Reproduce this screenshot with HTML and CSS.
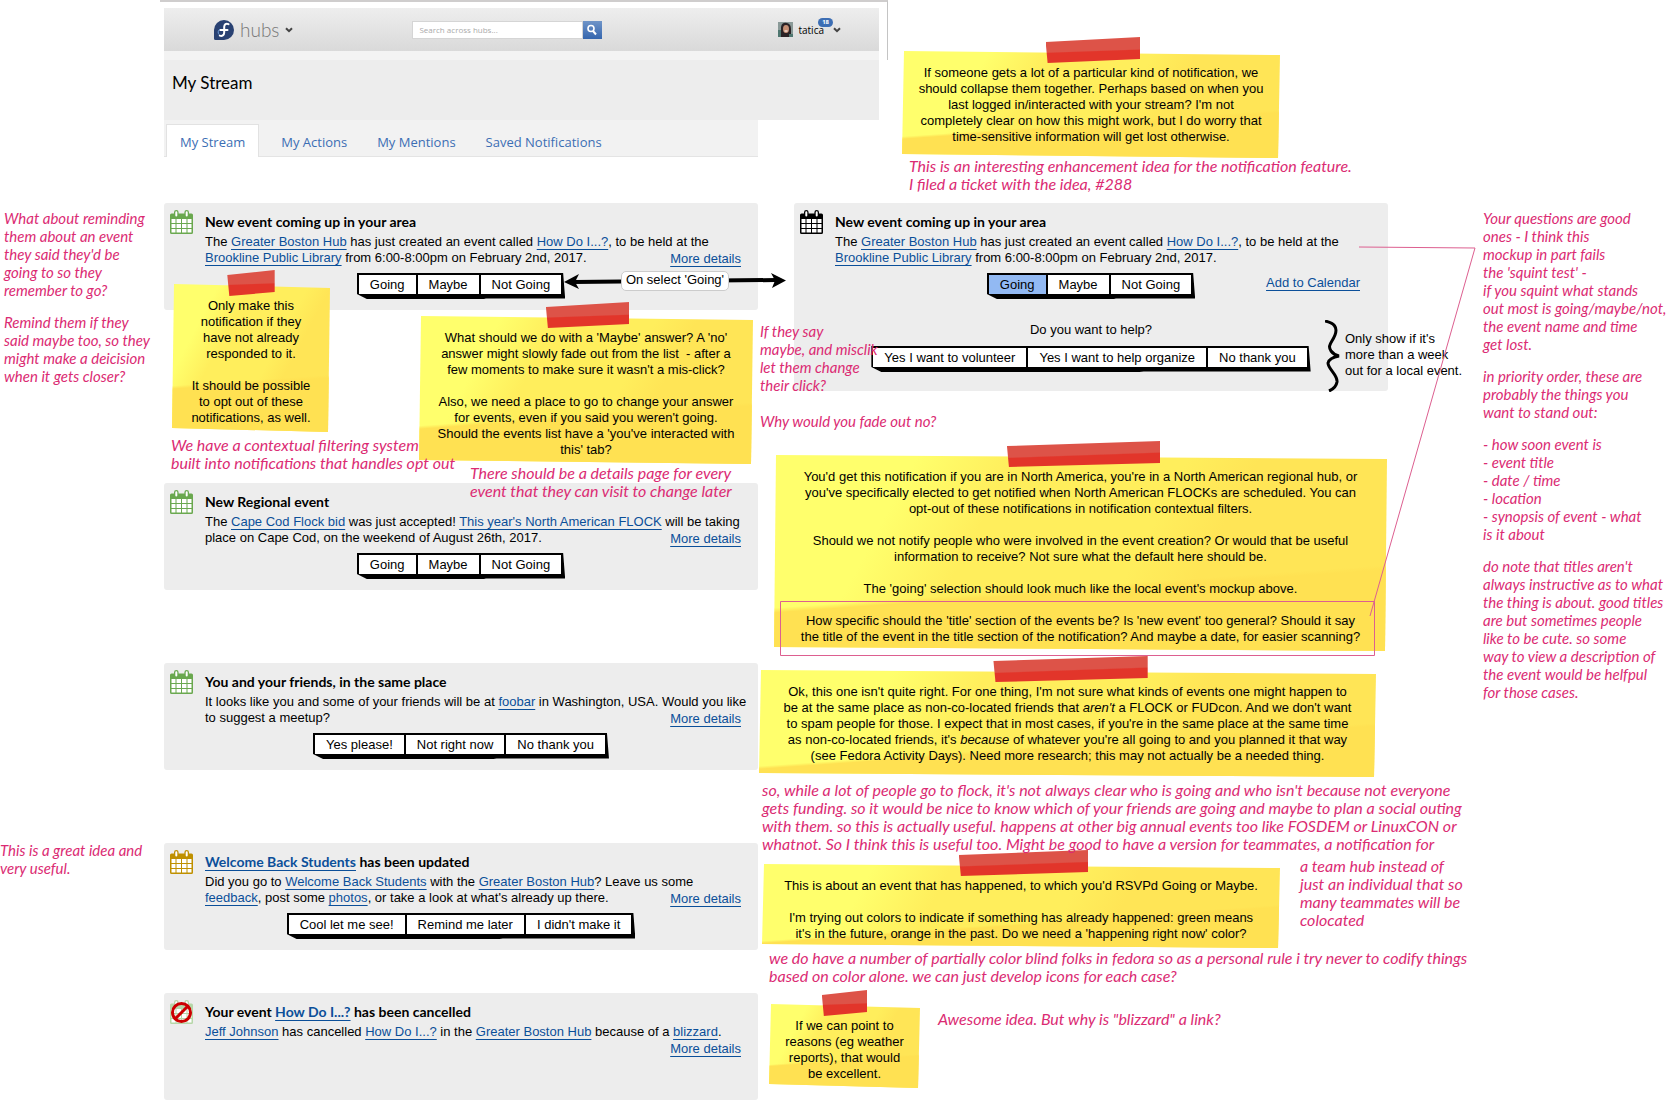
FILE: index.html
```html
<!DOCTYPE html>
<html lang="en">
<head>
<meta charset="utf-8">
<title>Fedora Hubs - My Stream</title>
<link rel="stylesheet" href="styles.css">
</head>
<body>
<svg class="defs" aria-hidden="true">
  <symbol id="calendar" viewBox="0 0 23 24">
    <path fill="currentColor" d="M1.500 3.500H4V2.200a2.300 2.200 0 0 1 4.600 0V3.500H14.400V2.200a2.300 2.200 0 0 1 4.600 0V3.500H21.500Q23 3.500 23 5V22.500Q23 24 21.500 24H1.500Q0 24 0 22.500V5Q0 3.500 1.500 3.500Z"/>
    <path fill="#fff" d="M5.300 2.200a1 1 0 0 1 2 0V5.500a1 1 0 0 1-2 0ZM15.700 2.200a1 1 0 0 1 2 0V5.500a1 1 0 0 1-2 0ZM1.500 9H5.500V13H1.500ZM6.500 9H11V13H6.500ZM12 9H16.500V13H12ZM17.500 9H21.500V13H17.500ZM1.500 14H5.500V18H1.500ZM6.500 14H11V18H6.500ZM12 14H16.500V18H12ZM17.500 14H21.500V18H17.500ZM1.500 19H5.500V22.500H1.500ZM6.500 19H11V22.500H6.500ZM12 19H16.500V22.500H12ZM17.500 19H21.500V22.500H17.500Z"/>
  </symbol>
  <symbol id="chevron" viewBox="0 0 8 6"><path fill="none" stroke="#444" stroke-width="2" d="M1 1.200 4 4.200 7 1.200"/></symbol>
</svg>

<main class="board">
  <header class="masthead">
    <div class="window">
      <div class="topbar">
        <a class="brand" href="#">
          <svg class="logo" viewBox="0 0 20 20"><path fill="#294172" d="M10 0A10 10 0 1 1 10 20H1.500Q0 20 0 18.500V10A10 10 0 0 1 10 0Z"/><path fill="none" stroke="#fff" stroke-width="2" stroke-linecap="round" d="M14.500 4.200C12 3 10.300 4.500 10.200 6.800V12.500C10.200 15.200 8 16.500 5.800 15.600M6.300 10H13.500"/><path fill="none" stroke="#6b9bd8" d="M5.800 9.200C4 10.500 3.600 13 5 14.500"/></svg>
          hubs
          <svg class="chevron"><use href="#chevron"/></svg>
        </a>
        <form class="search">
          <input type="text" aria-label="Search across hubs" placeholder="Search across hubs...">
          <button type="button" aria-label="Search"><svg viewBox="0 0 12 12"><circle cx="5" cy="4.500" r="3" fill="none" stroke="#fff" stroke-width="1.600"/><path stroke="#fff" stroke-width="2" d="M7 7 10 10.500"/></svg></button>
        </form>
        <div class="user">
          <svg class="avatar" viewBox="0 0 15 15"><path fill="#8a9a98" d="M0 0H15V15H0Z"/><path fill="#2b2326" d="M3 15V5Q4 0 9 1Q13 2 13 7V15Z"/><ellipse cx="8" cy="7" rx="3" ry="4" fill="#c58f74"/><path fill="#4f7770" d="M0 8H3V15H0ZM11 12H15V15H11Z"/><path stroke="#fff" d="M6.500 9H9.500"/></svg>
          <span>tatica</span>
          <span class="badge">18</span>
          <svg class="chevron"><use href="#chevron"/></svg>
        </div>
      </div>
    </div>
    <h1>My Stream</h1>
  </header>

  <aside class="remarks remarks-left">
    <p class="ink">What about reminding
them about an event
they said they'd be
going to so they
remember to go?</p>
    <p class="ink">Remind them if they
said maybe too, so they
might make a deicision
when it gets closer?</p>
    <p class="ink later">This is a great idea and
very useful.</p>
  </aside>

  <section class="mock">
    <nav class="tabs">
      <a class="active" href="#">My Stream</a>
      <a href="#">My Actions</a>
      <a href="#">My Mentions</a>
      <a href="#">Saved Notifications</a>
    </nav>

    <article class="card space-xl">
      <svg class="icon green"><use href="#calendar"/></svg>
      <h2>New event coming up in your area</h2>
      <p>The <a href="#">Greater Boston Hub</a> has just created an event called <a href="#">How Do I...?</a>, to be held at the
<a href="#">Brookline Public Library</a> from 6:00-8:00pm on February 2nd, 2017.</p>
      <a class="more" href="#">More details</a>
      <div class="choices"><button>Going</button><button>Maybe</button><button>Not Going</button></div>
    </article>

    <article class="card space-m">
      <svg class="icon green"><use href="#calendar"/></svg>
      <h2>New Regional event</h2>
      <p>The <a href="#">Cape Cod Flock bid</a> was just accepted! <a href="#">This year's North American FLOCK</a> will be taking
place on Cape Cod, on the weekend of August 26th, 2017.</p>
      <a class="more" href="#">More details</a>
      <div class="choices"><button>Going</button><button>Maybe</button><button>Not Going</button></div>
    </article>

    <article class="card space-m">
      <svg class="icon green"><use href="#calendar"/></svg>
      <h2>You and your friends, in the same place</h2>
      <p>It looks like you and some of your friends will be at <a href="#">foobar</a> in Washington, USA. Would you like
to suggest a meetup?</p>
      <a class="more" href="#">More details</a>
      <div class="choices"><button>Yes please!</button><button>Not right now</button><button>No thank you</button></div>
    </article>

    <article class="card space-s">
      <svg class="icon orange"><use href="#calendar"/></svg>
      <h2><a href="#">Welcome Back Students</a> has been updated</h2>
      <p>Did you go to <a href="#">Welcome Back Students</a> with the <a href="#">Greater Boston Hub</a>? Leave us some
<a href="#">feedback</a>, post some <a href="#">photos</a>, or take a look at what's already up there.</p>
      <a class="more" href="#">More details</a>
      <div class="choices"><button>Cool let me see!</button><button>Remind me later</button><button>I didn't make it</button></div>
    </article>

    <article class="card">
      <svg class="icon" viewBox="0 0 23 24"><use class="faded" href="#calendar"/><circle cx="11.500" cy="12.500" r="9" fill="none" stroke="#c00" stroke-width="3"/><path stroke="#c00" stroke-width="3" d="M17.500 6.500 5.500 18.500"/></svg>
      <h2>Your event <a href="#">How Do I...?</a> has been cancelled</h2>
      <p><a href="#">Jeff Johnson</a> has cancelled <a href="#">How Do I...?</a> in the <a href="#">Greater Boston Hub</a> because of a <a href="#">blizzard</a>.</p>
      <a class="more" href="#">More details</a>
    </article>
  </section>

  <section class="result">
    <article class="card tall">
      <svg class="icon"><use href="#calendar"/></svg>
      <h2>New event coming up in your area</h2>
      <p>The <a href="#">Greater Boston Hub</a> has just created an event called <a href="#">How Do I...?</a>, to be held at the
<a href="#">Brookline Public Library</a> from 6:00-8:00pm on February 2nd, 2017.</p>
      <div class="choices"><button class="chosen">Going</button><button>Maybe</button><button>Not Going</button></div>
      <a class="add" href="#">Add to Calendar</a>
      <p class="question">Do you want to help?</p>
      <div class="choices help"><button>Yes I want to volunteer</button><button>Yes I want to help organize</button><button>No thank you</button></div>
    </article>
  </section>

  <aside class="remarks remarks-right">
    <p class="ink">Your questions are good
ones - I think this
mockup in part fails
the 'squint test' -
if you squint what stands
out most is going/maybe/not,
the event name and time
get lost.</p>
    <p class="ink">in priority order, these are
probably the things you
want to stand out:</p>
    <p class="ink">- how soon event is
- event title
- date / time
- location
- synopsis of event - what
is it about</p>
    <p class="ink">do note that titles aren't
always instructive as to what
the thing is about. good titles
are but sometimes people
like to be cute. so some
way to view a description of
the event would be helfpul
for those cases.</p>
  </aside>

  <!-- Arrow between the two states of the first event -->
  <div class="flow-arrow">
    <svg viewBox="0 0 222 16"><path stroke="#000" stroke-width="4" d="M10 9 212 7"/><path d="M0 9 15 1 11 9 15 16ZM222 7.500 207 0 211 7.500 208 15Z"/></svg>
    <span>On select 'Going'</span>
  </div>
  <svg class="brace" viewBox="0 0 16 72"><path fill="none" stroke="#000" stroke-width="3" d="M0 1C9 3 13 7 10 15C7 23 2 25 6 31Q9 35 14 36Q4 38 3 43C3 49 13 55 12 62Q11 68 4 71"/></svg>
  <p class="brace-note">Only show if it's
more than a week
out for a local event.</p>

  <div class="sticky roomy note-collapse"><p>If someone gets a lot of a particular kind of notification, we
should collapse them together. Perhaps based on when you
last logged in/interacted with your stream? I'm not
completely clear on how this might work, but I do worry that
time-sensitive information will get lost otherwise.</p></div>

  <div class="sticky square note-only"><p>Only make this
notification if they
have not already
responded to it.

It should be possible
to opt out of these
notifications, as well.</p></div>

  <div class="sticky note-maybe"><p>What should we do with a 'Maybe' answer? A 'no'
answer might slowly fade out from the list  - after a
few moments to make sure it wasn't a mis-click?

Also, we need a place to go to change your answer
for events, even if you said you weren't going.
Should the events list have a 'you've interacted with
this' tab?</p></div>

  <div class="sticky note-regional"><p>You'd get this notification if you are in North America, you're in a North American regional hub, or
you've specifically elected to get notified when North American FLOCKs are scheduled. You can
opt-out of these notifications in notification contextual filters.

Should we not notify people who were involved in the event creation? Or would that be useful
information to receive? Not sure what the default here should be.

The 'going' selection should look much like the local event's mockup above.

How specific should the 'title' section of the events be? Is 'new event' too general? Should it say
the title of the event in the title section of the notification? And maybe a date, for easier scanning?</p></div>

  <div class="sticky roomy note-friends"><p>Ok, this one isn't quite right. For one thing, I'm not sure what kinds of events one might happen to
be at the same place as non-co-located friends that <em>aren't</em> a FLOCK or FUDcon. And we don't want
to spam people for those. I expect that in most cases, if you're in the same place at the same time
as non-co-located friends, it's <em>because</em> of whatever you're all going to and you planned it that way
(see Fedora Activity Days). Need more research; this may not actually be a needed thing.</p></div>

  <div class="sticky note-colors"><p>This is about an event that has happened, to which you'd RSVPd Going or Maybe.

I'm trying out colors to indicate if something has already happened: green means
it's in the future, orange in the past. Do we need a 'happening right now' color?</p></div>

  <div class="sticky square note-reasons"><p>If we can point to
reasons (eg weather
reports), that would
be excellent.</p></div>

  <svg class="pointer" viewBox="0 0 697 412"><path fill="none" stroke="#dd5f90" d="M579 1 695 2 590 370M.5 355.500H594.500V409.500H.5Z"/></svg>

  <p class="ink pin ink-ticket">This is an interesting enhancement idea for the notification feature.
I filed a ticket with the idea, #288</p>
  <p class="ink pin ink-filter">We have a contextual filtering system
built into notifications that handles opt out</p>
  <p class="ink pin ink-details">There should be a details page for every
event that they can visit to change later</p>
  <p class="ink pin ink-misclick">If they say
maybe, and misclik
let them change
their click?

Why would you fade out no?</p>
  <p class="ink pin ink-flock">so, while a lot of people go to flock, it's not always clear who is going and who isn't because not everyone
gets funding. so it would be nice to know which of your friends are going and maybe to plan a social outing
with them. so this is actually useful. happens at other big annual events too like FOSDEM or LinuxCON or
whatnot. So I think this is useful too. Might be good to have a version for teammates, a notification for</p>
  <p class="ink pin ink-team">a team hub instead of
just an individual that so
many teammates will be
colocated</p>
  <p class="ink pin ink-blind">we do have a number of partially color blind folks in fedora so as a personal rule i try never to codify things
based on color alone. we can just develop icons for each case?</p>
  <p class="ink pin ink-awesome">Awesome idea. But why is "blizzard" a link?</p>
</main>
</body>
</html>
```
FILE: styles.css
```css
* { box-sizing: border-box; }

body {
  margin: 0;
  background: #fff;
  color: #000;
  font: 13px/16px "Liberation Sans", sans-serif;
}

h1, h2, p { margin: 0; }
a { color: #0b4f99; text-underline-offset: 3px; }
p, h2 { white-space: pre; }
.defs { position: absolute; width: 0; height: 0; }

/* Board: margin remarks, stream, resulting state, remarks */
.board {
  position: relative;
  display: grid;
  grid-template-columns: 164px minmax(0, 594fr) 36px minmax(0, 594fr) 95px 194px;
  align-items: start;
  overflow: hidden;
}

/* Header of the mocked page */
.masthead { grid-column: 2 / 5; max-width: 728px; margin-left: -4px; }
.window {
  padding: 6px 8px 0 4px;
  border-top: 2px solid #cfcdcd;
  border-right: 1px solid #c4c4c4;
}
.topbar {
  display: flex;
  align-items: center;
  height: 52px;
  padding: 0 38px 0 50px;
  border-bottom: 9px solid #f3f3f3;
  background: linear-gradient(#eee, #d9d9d9);
}
.brand {
  display: flex;
  align-items: center;
  gap: 6px;
  color: #777;
  font: 300 19px/20px Lato, sans-serif;
  text-decoration: none;
}
.logo { width: 20px; height: 20px; }
.chevron { width: 8px; height: 6px; }
.search { display: flex; margin-left: 119px; }
.search input {
  width: 171px;
  height: 18px;
  padding: 0 6px;
  border: 1px solid #d5d5d5;
  background: #fff;
  font: 8px/16px "Open Sans", sans-serif;
}
.search input::placeholder { color: #aaa; }
.search button { width: 19px; height: 18px; padding: 3px; border: 0; background: linear-gradient(#6f94c8, #3566ae); }
.search svg { display: block; width: 12px; height: 12px; }
.user { position: relative; display: flex; align-items: center; gap: 5px; margin-left: auto; font: 10px/16px "Open Sans", sans-serif; }
.user .chevron { margin-left: 4px; }
.avatar { width: 15px; height: 15px; }
.badge {
  position: absolute;
  top: -4px;
  right: 8px;
  padding: 0 4px;
  border-radius: 5px;
  background: #3c6eb4;
  color: #fff;
  font: bold 6px/9px "Open Sans", sans-serif;
}
h1 {
  margin: 0 9px 0 4px;
  padding: 13px 8px 27px;
  background: #ededed;
  font: 17px/20px Lato, sans-serif;
}

.tabs {
  display: flex;
  height: 37px;
  padding: 4px 0 0 2px;
  border-bottom: 1px solid #e4e4e4;
  background: #f2f2f2;
  font: 13px/36px "Open Sans", sans-serif;
}
.tabs a { padding: 0 15px; color: #3c6eb4; text-decoration: none; }
.tabs .active { margin-right: 7px; padding: 0 13px; height: 33px; border: 1px solid #e2e2e2; border-bottom: 0; background: #fff; line-height: 34px; }

/* Notifications */
.mock { grid-column: 2; }
.result { grid-column: 4; padding-top: 83px; }
.tabs + .card { margin-top: 46px; }
.card {
  display: grid;
  grid-template-columns: 41px minmax(0, 1fr);
  align-content: start;
  min-height: 107px;
  padding-top: 11px;
  border-radius: 3px;
  background: #ededed;
}
.card h2 { grid-column: 2; grid-row: 1; padding-bottom: 4px; font: bold 14px/16px Lato, sans-serif; }
.card > p { grid-column: 2; grid-row: 2; min-height: 33px; }
.icon { grid-column: 1; grid-row: 1 / 3; width: 23px; height: 24px; margin: -4px 0 0 6px; }
.green { color: #6aa84f; }
.orange { color: #bf9000; }
.faded { color: #b6d7a8; }
.more { grid-column: 2; grid-row: 2; place-self: end; padding-right: 17px; }
.choices {
  grid-column: 1 / 3;
  grid-row: 3;
  justify-self: center;
  display: flex;
  gap: 2px;
  margin-top: 6px;
  padding: 2px 4px 5px 2px;
  background: #000;
  clip-path: polygon(0 0, calc(100% - 2px) 0, 100% 98%, 62% 98%, 61% 100%, 10px 100%, 0 calc(100% - 5px));
}
.choices button { height: 19px; padding: 0 11px; border: 0; background: #fff; color: #000; font: inherit; }
.choices .chosen { background: #92b9f3; }
.add { grid-column: 2; grid-row: 3; place-self: center end; padding-right: 28px; }
.card .question { grid-column: 1 / 3; grid-row: 4; justify-self: center; min-height: 0; padding-top: 23px; }
.card .help { grid-row: 5; margin-top: 8px; }
.space-xl { margin-bottom: 173px; }
.space-m { margin-bottom: 73px; }
.space-s { margin-bottom: 43px; }
.tall { min-height: 188px; }

/* Hand-written remarks */
.ink { color: #db2b73; font: italic 16px/18px Lato, sans-serif; }
.remarks { display: flex; flex-direction: column; gap: 14px; padding-top: 89px; }
.remarks .ink, .ink-misclick { font-size: 15px; }
.remarks-left { grid-column: 1; padding-left: 4px; }
.remarks-right { grid-column: 6; }
.later { margin: 442px 0 0 -4px; }
.pin { position: absolute; }
.ink-ticket { left: 909px; top: 157px; }
.ink-filter { left: 171px; top: 436px; }
.ink-details { left: 470px; top: 464px; }
.ink-misclick { left: 760px; top: 322px; }
.ink-flock { left: 762px; top: 781px; }
.ink-team { left: 1300px; top: 857px; }
.ink-blind { left: 769px; top: 949px; }
.ink-awesome { left: 938px; top: 1010px; }

/* Sticky notes pinned over the board */
.sticky { position: absolute; padding: 14px 0 6px; text-align: center; }
.roomy { padding-bottom: 13px; }
.sticky p { position: relative; }
.sticky::before {
  content: "";
  position: absolute;
  inset: 0;
  background:
    linear-gradient(176deg, transparent 64%, #ffe152 66%),
    linear-gradient(118deg, #ffff6c 20%, #ffee5c 34%, #ffee5c 58%, #ffe556 68%);
  clip-path: polygon(2px 0, 100% 4px, calc(100% - 2px) 100%, 0 calc(100% - 4px));
}
.sticky::after {
  content: "";
  position: absolute;
  top: -14px;
  left: 38%;
  width: 25%;
  height: 26px;
  background: linear-gradient(178deg, #dd5348 52%, #e2352a 56%);
  clip-path: polygon(0 5px, 100% 0, 100% 22px, 2px 100%);
}
.square::after { left: 35%; width: 30%; }
.note-collapse { left: 902px; top: 51px; width: 378px; }
.note-only { left: 172px; top: 284px; width: 158px; }
.note-maybe { left: 419px; top: 316px; width: 334px; }
.note-regional { left: 774px; top: 455px; width: 613px; }
.note-friends { left: 759px; top: 670px; width: 617px; }
.note-colors { left: 762px; top: 864px; width: 518px; }
.note-reasons { left: 769px; top: 1004px; width: 151px; }

/* Connectors */
.pointer { position: absolute; left: 780px; top: 246px; width: 697px; height: 412px; }
.brace { position: absolute; left: 1325px; top: 320px; width: 16px; height: 72px; }
.brace-note { position: absolute; left: 1345px; top: 331px; }
.flow-arrow { position: absolute; left: 564px; top: 271px; width: 222px; display: grid; place-items: center; }
.flow-arrow > * { grid-area: 1 / 1; }
.flow-arrow svg { width: 222px; height: 16px; }
.flow-arrow span { padding: 0 4px 2px; border: 1px solid #ccc; border-radius: 5px; background: #fff; }
```
